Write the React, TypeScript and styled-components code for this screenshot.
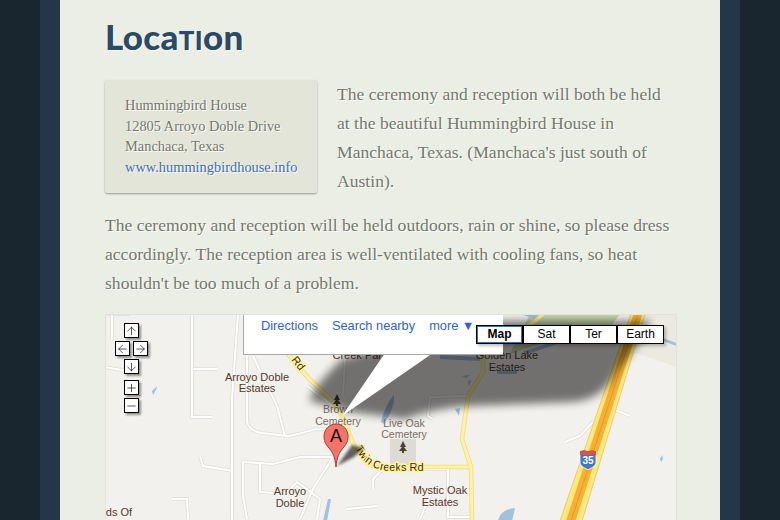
import React from "react";
import styled, { createGlobalStyle } from "styled-components";
import { ArrowUp, ArrowDown, ArrowLeft, ArrowRight, Plus, Minus } from "lucide-react";

const GlobalStyle = createGlobalStyle`
  html, body {
    margin: 0;
    height: 520px;
    overflow: hidden;
    background: #19252f;
  }
`;

const STREETS = [
  "M107 315 L130 315 M112 315 L112 340",
  "M105 368 L128 372",
  "M192 315 L192 418 L212 418",
  "M193 370 L217 370",
  "M238 315 L232 400 L232 520",
  "M247 357 L247 423 C249 430 255 433 262 434 L287 437 C300 436 310 430 320 430 L345 432",
  "M253 357 L277 407 L285 437",
  "M307 387 L333 407",
  "M243 463 L273 465 L300 458 L333 458 L345 452",
  "M243 463 L243 497 L247 520",
  "M260 465 L260 493 L273 494",
  "M297 483 L320 500 L317 520",
  "M297 483 L287 493",
  "M333 458 L313 490 L300 520",
  "M200 457 L203 467 L233 472",
  "M172 500 L187 500 L188 520",
  "M347 510 L377 507",
  "M373 490 L373 480 L383 470 L393 467",
  "M448 470 L448 518 L472 518",
  "M400 470 L448 470",
  "M420 520 L433 490",
  "M430 398 L428 417 L433 420 M430 398 L468 397",
  "M565 443 L580 437 L593 423",
  "M613 410 L630 417",
  "M300 318 L300 345 L340 345",
  "M345 360 L343 395",
];

const YELLOW_ROADS = [
  "M284 350 L303 373 C315 387 325 393 333 403 C342 415 345 422 348 430 C352 445 357 453 365 462 C372 470 385 469 400 468 L471 468 L472 525",
  "M471 468 L462 440 L468 397 L483 373 L483 355",
  "M483 355 C500 340 530 330 543 315",
];

const MAP_LABELS = [
  { x: 257, y: 382, text: "Arroyo Doble" },
  { x: 257, y: 393, text: "Estates" },
  { x: 290, y: 496, text: "Arroyo" },
  { x: 290, y: 508, text: "Doble" },
  { x: 440, y: 495, text: "Mystic Oak" },
  { x: 440, y: 507, text: "Estates" },
  { x: 507, y: 360, text: "Golden Lake" },
  { x: 507, y: 372, text: "Estates" },
  { x: 360, y: 360, text: "Creek Park" },
  { x: 119, y: 517, text: "ds Of" },
];

const Tree = ({ x, y }: { x: number; y: number }) => (
  <path
    d={`M${x} ${y} l-3 6 h2 l-3 4 h3 v2 h2 v-2 h3 l-3 -4 h2 z`}
    fill="#4a4038"
  />
);

const MapDrawing = () => (
  <MapSvg viewBox="106 316 570 240">
    <defs>
      <filter id="soft" x="-10%" y="-10%" width="120%" height="130%">
        <feGaussianBlur stdDeviation="4" />
      </filter>
      <filter id="softPin" x="-30%" y="-30%" width="160%" height="160%">
        <feGaussianBlur stdDeviation="1.5" />
      </filter>
      <path id="twinCreeks" d="M355 449 C362 463 372 471 390 472 L430 472" />
    </defs>

    <rect x="105" y="315" width="572" height="240" fill="#f2f1ed" />
    <path d="M640 315 L677 315 L677 368 L633 353 Z" fill="#ece9e1" />
    <path d="M530 315 L620 315 L600 342 L540 345 L510 355 Z" fill="#c9d6ae" />
    <rect x="390" y="440" width="26" height="30" fill="#dedbd5" />

    {STREETS.map((d) => (
      <path key={`o${d}`} d={d} fill="none" stroke="#dfddd6" strokeWidth={3.5} />
    ))}
    {STREETS.map((d) => (
      <path key={d} d={d} fill="none" stroke="#ffffff" strokeWidth={2} />
    ))}

    {/* water */}
    <g fill="#a3c0df">
      <path d="M152 392 L157 387 L156 391 L153 396 Z" />
      <path d="M381 423 C384 410 390 400 394 396 C395 405 390 416 384 425 Z" />
      <path d="M440 356 L480 358 L480 362 L440 360 Z" />
      <path d="M497 372 L517 371 L517 375 L497 375 Z" />
      <path d="M523 352 L557 342 L557 345 L525 356 Z" />
      <path d="M462 377 L470 376 L466 379 Z" />
      <path d="M468 382 L471 381 L469 388 Z" />
      <path d="M455 410 L460 409 L459 417 Z" />
      <path d="M498 522 C500 512 508 510 515 509 L512 522 Z" />
      <path d="M323 522 L328 500 L331 500 L327 522 Z" />
      <path d="M660 460 L662 456 L663 460 L661 463 Z" />
      <path d="M520 315 L535 320 L545 315 Z" />
      <path d="M663 339 L677 344 L677 347 L663 342 Z" />
    </g>

    {YELLOW_ROADS.map((d) => (
      <path key={`ro${d}`} d={d} fill="none" stroke="#e8dc8c" strokeWidth={4.5} />
    ))}
    {YELLOW_ROADS.map((d) => (
      <path key={`r${d}`} d={d} fill="none" stroke="#fff39b" strokeWidth={3} />
    ))}

    {/* interstate */}
    <path d="M631 315 L645 315 L582 522 L560 522 Z" fill="#ffe97f" stroke="#e8c35c" strokeWidth={0.8} />
    <path d="M633.5 315 L642.5 315 L575.5 522 L566 522 Z" fill="#f6b133" />
    <path d="M638 315 L571 522" fill="none" stroke="#e0992a" strokeWidth={1} />

    <Tree x={337} y={395} />
    <Tree x={403} y={442} />

    {MAP_LABELS.map((label) => (
      <PlaceLabel key={label.text + label.y} x={label.x} y={label.y}>
        {label.text}
      </PlaceLabel>
    ))}
    <FaintLabel x={338} y={414}>Brown</FaintLabel>
    <FaintLabel x={338} y={426}>Cemetery</FaintLabel>
    <FaintLabel x={404} y={428}>Live Oak</FaintLabel>
    <FaintLabel x={404} y={439}>Cemetery</FaintLabel>
    <RoadLabel transform="translate(291 361) rotate(52)">Rd</RoadLabel>
    <RoadLabel>
      <textPath href="#twinCreeks">Twin Creeks Rd</textPath>
    </RoadLabel>

    {/* interstate shield */}
    <path d="M580 452 H596 V463 C596 468 590 469 588 471 C586 469 580 468 580 463 Z" fill="#3f78c4" stroke="#fff" strokeWidth={0.8} />
    <path d="M580 452 L584 451 L588 452 L592 451 L596 452 V456 H580 Z" fill="#d9534a" />
    <ShieldText x={588} y={465}>35</ShieldText>

    {/* balloon and marker shadows */}
    <path
      d="M310 402 C312 390 330 372 342 360 L392 345 L502 322 L650 322 L646 335 L617 372 C605 395 590 402 570 403 L470 407 C450 408 425 412 405 420 L345 412 C330 405 318 405 310 402 Z"
      fill="#000"
      opacity={0.53}
      filter="url(#soft)"
    />
    <path d="M337 467 L352 446 L364 449 L354 458 Z" fill="#000" opacity={0.6} filter="url(#softPin)" />

    {/* balloon tail */}
    <path d="M385 354 L342 417 L433 354 Z" fill="#fff" />

    {/* marker */}
    <path
      d="M336 468 C335 458 333 454 329 449 C325 445 324 441 324 437 C324 430 330 425 336 425 C342 425 348 430 348 437 C348 441 347 445 343 449 C339 454 337 458 336 468 Z"
      fill="#f7736a"
      stroke="#a53a32"
      strokeWidth={1}
    />
    <MarkerLetter x={336} y={443}>A</MarkerLetter>
  </MapSvg>
);

export default function App() {
  return (
    <>
      <GlobalStyle />
      <Column>
        <Paper>
          <Title>
            Loca<TitleCaps>ti</TitleCaps>on
          </Title>
          <Address>
            Hummingbird House
            <br />
            12805 Arroyo Doble Drive
            <br />
            Manchaca, Texas
            <br />
            <AddressLink href="#">www.hummingbirdhouse.info</AddressLink>
          </Address>
          <Text>
            The ceremony and reception will both be held at the beautiful
            Hummingbird House in Manchaca, Texas. (Manchaca's just south of
            Austin).
          </Text>
          <Text>
            The ceremony and reception will be held outdoors, rain or shine, so
            please dress accordingly. The reception area is well-ventilated with
            cooling fans, so heat shouldn't be too much of a problem.
          </Text>
          <MapFrame>
            <MapDrawing />
            <InfoWindow>
              <InfoLink>Directions</InfoLink>
              <InfoLink>Search nearby</InfoLink>
              <InfoLink>more ▼</InfoLink>
            </InfoWindow>
            <PanControls>
              <MapButton $center><ArrowUp size={14} strokeWidth={1.2} /></MapButton>
              <MapButton><ArrowLeft size={14} strokeWidth={1.2} /></MapButton>
              <MapButton><ArrowRight size={14} strokeWidth={1.2} /></MapButton>
              <MapButton $center><ArrowDown size={14} strokeWidth={1.2} /></MapButton>
              <MapButton $center $gapAbove><Plus size={14} strokeWidth={1.2} /></MapButton>
              <MapButton $center><Minus size={14} strokeWidth={1.2} /></MapButton>
            </PanControls>
            <MapTypes>
              <MapType $active>Map</MapType>
              <MapType>Sat</MapType>
              <MapType>Ter</MapType>
              <MapType>Earth</MapType>
            </MapTypes>
          </MapFrame>
        </Paper>
      </Column>
    </>
  );
}

const Column = styled.div`
  box-sizing: border-box;
  width: 700px;
  height: 520px;
  margin: 0 auto;
  padding: 0 20px;
  background: #243648;
  overflow: hidden;
`;

const Paper = styled.div`
  box-sizing: border-box;
  height: 100%;
  padding: 0 43px 0 45px;
  background: #ebeee4;
`;

const Title = styled.h1`
  margin: 0 0 19px;
  padding-top: 11px;
  height: 50px;
  font: 900 35px/50px Lato, sans-serif;
  letter-spacing: 0.3px;
  color: #2a4a68;
  text-shadow: 1px 1px 0 #fff;
`;

const TitleCaps = styled.span`
  font-size: 26px;
  text-transform: uppercase;
`;

const Address = styled.div`
  box-sizing: border-box;
  float: left;
  width: 212px;
  height: 113px;
  margin-right: 20px;
  padding: 15px 0 0 20px;
  background: #e3e5d8;
  border-radius: 2px;
  box-shadow: 0 1px 2px rgba(0, 0, 0, 0.35);
  font: 14.4px/20.7px "Liberation Serif", serif;
  color: #74786c;
  text-shadow: 1px 1px 0 #fff;
`;

const AddressLink = styled.a`
  color: #3d6eb5;
  text-decoration: none;
`;

const Text = styled.p`
  margin: 0 0 15px;
  padding-right: 4px;
  font: 17.6px/29px "Liberation Serif", serif;
  color: #74786c;
  text-shadow: 1px 1px 0 #fff;
`;

const MapFrame = styled.div`
  position: relative;
  clear: both;
  box-sizing: border-box;
  height: 300px;
  margin-top: 16px;
  border: 1px solid #e1e3da;
  border-bottom: 0;
  overflow: hidden;
  font-family: "Liberation Sans", sans-serif;
`;

const MapSvg = styled.svg`
  display: block;
  width: 570px;
  height: 240px;
`;

const PlaceLabel = styled.text`
  font: 11px "Liberation Sans", sans-serif;
  fill: #55392c;
  text-anchor: middle;
`;

const FaintLabel = styled(PlaceLabel)`
  font-size: 10.5px;
  fill: #7a6e64;
`;

const RoadLabel = styled.text`
  font: 11px "Liberation Sans", sans-serif;
  fill: #3c2a20;
  stroke: #fff39b;
  stroke-width: 3px;
  paint-order: stroke;
`;

const ShieldText = styled.text`
  font: bold 10px "Liberation Sans", sans-serif;
  fill: #fff;
  text-anchor: middle;
`;

const MarkerLetter = styled.text`
  font: 18px "Liberation Sans", sans-serif;
  fill: #111;
  text-anchor: middle;
`;

const InfoWindow = styled.div`
  position: absolute;
  top: -1px;
  left: 137px;
  box-sizing: border-box;
  display: flex;
  gap: 14px;
  width: 260px;
  height: 41px;
  padding: 4px 0 0 17px;
  background: #fff;
  border-left: 1px solid #aaa;
  border-bottom: 1px solid #aaa;
`;

const InfoLink = styled.span`
  font-size: 12.8px;
  line-height: 16px;
  color: #2f5fdc;
`;

const PanControls = styled.div`
  position: absolute;
  top: 8px;
  left: 9px;
  display: grid;
  grid-template-columns: repeat(2, 15px);
  gap: 3px;
`;

const MapButton = styled.div<{ $center?: boolean; $gapAbove?: boolean }>`
  grid-column: ${(p) => (p.$center ? "1 / span 2" : "auto")};
  justify-self: center;
  box-sizing: border-box;
  display: flex;
  align-items: center;
  justify-content: center;
  width: 15px;
  height: 15px;
  margin-top: ${(p) => (p.$gapAbove ? "3px" : "0")};
  background: #fff;
  border: 1px solid #000;
  color: #000;
  box-shadow: 2px 2px 2px rgba(0, 0, 0, 0.4);
`;

const MapTypes = styled.div`
  position: absolute;
  top: 10px;
  left: 370px;
  display: flex;
  box-shadow: 2px 2px 3px rgba(0, 0, 0, 0.25);
`;

const MapType = styled.div<{ $active?: boolean }>`
  box-sizing: border-box;
  width: 47px;
  height: 19px;
  background: #fff;
  border: 1px solid #000;
  box-shadow: ${(p) => (p.$active ? "inset 0 0 0 1px #3d6eb5" : "none")};
  font-size: 12px;
  font-weight: ${(p) => (p.$active ? 700 : 400)};
  line-height: 17px;
  text-align: center;
  color: #000;
`;
